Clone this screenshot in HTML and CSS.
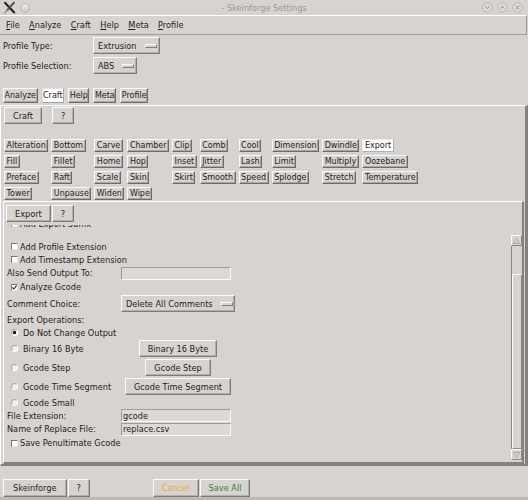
FILE: index.html
```html
<!DOCTYPE html>
<html lang="en">
<head>
    <meta charset="UTF-8">
    <meta name="viewport" content="width=device-width, initial-scale=1.0">
    <title>Skeinforge Settings</title>
    <link rel="stylesheet" href="styles.css">
</head>
<body>
    <div class="window">
        <div class="titlebar">
            <div class="tb-left">
                <svg class="app-icon" width="13" height="13" viewBox="0 0 13 13">
                    <path d="M2 1.8 L11.2 11.4" stroke="#262626" stroke-width="2.2" stroke-linecap="round"/>
                    <path d="M11 1.6 L4 9.4" stroke="#4a4a4a" stroke-width="1.8" stroke-linecap="round"/>
                    <path d="M4 9.4 L1.6 12" stroke="#a09a90" stroke-width="1.6" stroke-linecap="round"/>
                </svg>
                <span class="pin"></span>
            </div>
            <div class="title">- Skeinforge Settings</div>
            <div class="tb-right">
                <svg class="wm-btn" width="11" height="11" viewBox="0 0 11 11"><circle cx="5.5" cy="5.5" r="4.8"/><path d="M3.6 4.6 L5.5 6.5 L7.4 4.6"/></svg>
                <svg class="wm-btn" width="11" height="11" viewBox="0 0 11 11"><circle cx="5.5" cy="5.5" r="4.8"/><path d="M3.6 6.4 L5.5 4.5 L7.4 6.4"/></svg>
                <svg class="wm-btn" width="11" height="11" viewBox="0 0 11 11"><circle cx="5.5" cy="5.5" r="4.8"/><path d="M3.8 3.8 L7.2 7.2 M7.2 3.8 L3.8 7.2"/></svg>
            </div>
        </div>

        <div class="menubar">
            <span><u>F</u>ile</span>
            <span><u>A</u>nalyze</span>
            <span><u>C</u>raft</span>
            <span><u>H</u>elp</span>
            <span><u>M</u>eta</span>
            <span><u>P</u>rofile</span>
        </div>

        <div class="profile">
            <div class="profile-row">
                <span class="profile-label">Profile Type:</span>
                <span class="optmenu">Extrusion<i class="indicator"></i></span>
            </div>
            <div class="profile-row">
                <span class="profile-label">Profile Selection:</span>
                <span class="optmenu">ABS<i class="indicator"></i></span>
            </div>
        </div>

        <div class="tabs">
            <span class="tab">Analyze</span>
            <span class="tab active">Craft</span>
            <span class="tab">Help</span>
            <span class="tab">Meta</span>
            <span class="tab">Profile</span>
        </div>

        <div class="notebook">
            <div class="toolbar craft-bar">
                <span class="btn">Craft</span>
                <span class="btn">?</span>
            </div>

            <div class="plugins">
                <span class="plug">Alteration</span>
                <span class="plug">Bottom</span>
                <span class="plug">Carve</span>
                <span class="plug">Chamber</span>
                <span class="plug">Clip</span>
                <span class="plug">Comb</span>
                <span class="plug">Cool</span>
                <span class="plug">Dimension</span>
                <span class="plug">Dwindle</span>
                <span class="plug active">Export</span>
                <span class="plug">Fill</span>
                <span class="plug">Fillet</span>
                <span class="plug">Home</span>
                <span class="plug">Hop</span>
                <span class="plug">Inset</span>
                <span class="plug">Jitter</span>
                <span class="plug">Lash</span>
                <span class="plug">Limit</span>
                <span class="plug">Multiply</span>
                <span class="plug">Oozebane</span>
                <span class="plug">Preface</span>
                <span class="plug">Raft</span>
                <span class="plug">Scale</span>
                <span class="plug">Skin</span>
                <span class="plug">Skirt</span>
                <span class="plug">Smooth</span>
                <span class="plug">Speed</span>
                <span class="plug">Splodge</span>
                <span class="plug">Stretch</span>
                <span class="plug">Temperature</span>
                <span class="plug">Tower</span>
                <span class="plug">Unpause</span>
                <span class="plug">Widen</span>
                <span class="plug">Wipe</span>
            </div>

            <div class="pane">
                <div class="toolbar export-bar">
                    <span class="btn">Export</span>
                    <span class="btn">?</span>
                </div>

                <div class="scroller">
                    <div class="canvas">
                        <div class="row cut">
                            <span class="check"><i class="box"></i>Add Export Suffix</span>
                        </div>
                        <div class="row">
                            <span class="check"><i class="box"></i>Add Profile Extension</span>
                        </div>
                        <div class="row">
                            <span class="check"><i class="box"></i>Add Timestamp Extension</span>
                        </div>
                        <div class="row h14">
                            <span class="lbl">Also Send Output To:</span>
                            <span class="entry"></span>
                        </div>
                        <div class="row h14">
                            <span class="check"><i class="box"><svg width="5" height="5" viewBox="0 0 5 5"><path d="M0.4 2.4 L1.9 4 L4.6 0.6"/></svg></i>Analyze Gcode</span>
                        </div>
                        <div class="row h19">
                            <span class="lbl">Comment Choice:</span>
                            <span class="optmenu">Delete All Comments<i class="indicator"></i></span>
                        </div>
                        <div class="row">
                            <span class="lbl">Export Operations:</span>
                        </div>
                        <div class="row">
                            <span class="radio wide-cell"><i class="dot on"></i>Do Not Change Output</span>
                        </div>
                        <div class="row h19">
                            <span class="radio"><i class="dot"></i>Binary 16 Byte</span>
                            <span class="btn centered">Binary 16 Byte</span>
                        </div>
                        <div class="row h19">
                            <span class="radio"><i class="dot"></i>Gcode Step</span>
                            <span class="btn centered">Gcode Step</span>
                        </div>
                        <div class="row h19">
                            <span class="radio"><i class="dot"></i>Gcode Time Segment</span>
                            <span class="btn centered">Gcode Time Segment</span>
                        </div>
                        <div class="row">
                            <span class="radio"><i class="dot"></i>Gcode Small</span>
                        </div>
                        <div class="row">
                            <span class="lbl">File Extension:</span>
                            <span class="entry">gcode</span>
                        </div>
                        <div class="row h14">
                            <span class="lbl">Name of Replace File:</span>
                            <span class="entry">replace.csv</span>
                        </div>
                        <div class="row h14">
                            <span class="check"><i class="box"></i>Save Penultimate Gcode</span>
                        </div>
                    </div>

                    <div class="scrollbar">
                        <div class="sb-arrow">
                            <svg width="7" height="6" viewBox="0 0 7 6"><path d="M0.5 5.5 L3.5 0.5 L6.5 5.5 Z"/></svg>
                        </div>
                        <div class="sb-trough">
                            <div class="sb-thumb"></div>
                        </div>
                        <div class="sb-arrow">
                            <svg width="7" height="6" viewBox="0 0 7 6"><path d="M0.5 0.5 L3.5 5.5 L6.5 0.5 Z"/></svg>
                        </div>
                    </div>
                </div>
            </div>
        </div>

        <div class="footer">
            <span class="btn tall wide">Skeinforge</span>
            <span class="btn tall">?</span>
            <span class="btn tall cancel">Cancel</span>
            <span class="btn tall save">Save All</span>
        </div>
    </div>
</body>
</html>
```

FILE: styles.css
```css
* {
    box-sizing: border-box;
}

body {
    margin: 0;
    background: #d7d3d0;
    color: #1e1e1e;
    font-family: 'DejaVu Sans', sans-serif;
    font-size: 8.2px;
}

.window {
    width: 528px;
    height: 500px;
    display: flex;
    flex-direction: column;
    overflow: hidden;
}

/* title bar */
.titlebar {
    height: 15px;
    display: grid;
    grid-template-columns: 1fr auto 1fr;
    align-items: center;
}
.tb-left {
    display: flex;
    align-items: center;
    gap: 4px;
    padding-left: 3px;
}
.pin {
    width: 10px;
    height: 10px;
    border-radius: 50%;
    border: 1px solid #b9b5b2;
    background: linear-gradient(#eeecea, #cdc9c6);
}
.title {
    color: #9d9a97;
}
.tb-right {
    display: flex;
    justify-content: flex-end;
    gap: 4px;
    padding-right: 5px;
}
.wm-btn circle {
    fill: #dcd8d5;
    stroke: #b2aeab;
    stroke-width: 0.8;
}
.wm-btn path {
    fill: none;
    stroke: #8e8a87;
    stroke-width: 1;
}

/* menu */
.menubar {
    width: 527px;
    height: 20px;
    display: flex;
    align-items: center;
    gap: 9.4px;
    padding-left: 6px;
    border-top: 1px solid #fff;
    border-bottom: 1px solid #9e9a97;
    border-right: 1px solid #9e9a97;
}
.menubar u {
    text-underline-offset: 1px;
}

/* profile selectors */
.profile {
    display: flex;
    flex-direction: column;
    gap: 3px;
    padding: 2px 0 0 3px;
}
.profile-row {
    display: flex;
    align-items: center;
    height: 17px;
}
.profile-label {
    width: 90px;
}

.optmenu {
    display: inline-flex;
    align-items: center;
    height: 17px;
    padding: 0 2px 0 4px;
    border: 1px solid;
    border-color: #fbfaf9 #7f7b78 #7f7b78 #fbfaf9;
    box-shadow: inset -1px -1px 0 #b3afac;
    white-space: nowrap;
}
.indicator {
    flex-shrink: 0;
    width: 12px;
    height: 4px;
    margin-left: 8px;
    border: 1px solid;
    border-color: #fbfaf9 #7f7b78 #7f7b78 #fbfaf9;
}

/* tabs */
.tabs {
    display: flex;
    gap: 4px;
    height: 15px;
    margin-top: 14px;
    padding-left: 3px;
    font-size: 8px;
}
.tab {
    display: flex;
    align-items: center;
    height: 15px;
    padding: 0 0.5px;
    border: 1px solid;
    border-color: #fbfaf9 #6f6b68 #6f6b68 #fbfaf9;
    box-shadow: inset -1px -1px 0 #aaa6a3;
}
.tab.active {
    background: #fff;
    border-color: #e4e1df #a7a3a0 #a7a3a0 #e4e1df;
    box-shadow: none;
}

/* notebook frame */
.notebook {
    height: 361px;
    margin-top: 2px;
    display: flex;
    flex-direction: column;
    border-style: solid;
    border-width: 1px 3px 2px 1px;
    border-color: #fff #85817e #85817e #fff;
}

.toolbar {
    display: flex;
}
.craft-bar {
    gap: 10px;
    padding: 1px 0 0 3px;
}
.export-bar {
    gap: 1px;
    padding: 3px 0 0 2px;
}

.btn {
    display: inline-flex;
    align-items: center;
    justify-content: center;
    height: 17px;
    padding: 0 8px;
    border: 1px solid;
    border-color: #fbfaf9 #7f7b78 #7f7b78 #fbfaf9;
    box-shadow: inset -1px -1px 0 #b3afac;
    white-space: nowrap;
}
.btn.tall {
    height: 18px;
}
.btn.wide {
    padding: 0 9px;
}
.btn.centered {
    justify-self: center;
}
.btn.cancel {
    color: #f0aa30;
}
.btn.save {
    color: #2f8a2f;
}

/* plugin buttons */
.plugins {
    display: grid;
    grid-template-columns: repeat(10, max-content);
    grid-auto-rows: 13px;
    gap: 3px;
    justify-items: start;
    margin-top: 15px;
    padding-left: 3px;
    font-size: 8px;
}
.plug {
    display: flex;
    align-items: center;
    height: 13px;
    padding: 0 1.5px;
    border: 1px solid;
    border-color: #fbfaf9 #6f6b68 #6f6b68 #fbfaf9;
    box-shadow: inset -1px -1px 0 #aaa6a3;
}
.plug.active {
    background: #fff;
    border-color: #ebe9e7 #b4b0ad #b4b0ad #ebe9e7;
    box-shadow: none;
}

/* export pane */
.pane {
    flex: 1;
    display: flex;
    flex-direction: column;
    margin: 1px 1px 0 2px;
    border-style: solid;
    border-width: 1px 2px 2px 1px;
    border-color: #fff #85817e #85817e #fff;
}

.scroller {
    display: flex;
    height: 237px;
    margin-top: 3px;
}
.canvas {
    flex: 1;
    overflow: hidden;
    padding-left: 3px;
}

.row {
    display: grid;
    grid-template-columns: 114px 114px;
    align-items: center;
    height: 13px;
    white-space: nowrap;
}
.row.h14 {
    height: 14px;
}
.row.h19 {
    height: 19px;
}
.row.cut {
    margin: -8px 0 10px;
}

.check,
.radio {
    display: flex;
    align-items: center;
    padding-left: 4px;
}
.check,
.wide-cell {
    grid-column: 1 / -1;
}
.box {
    flex-shrink: 0;
    display: flex;
    align-items: center;
    justify-content: center;
    width: 7px;
    height: 7px;
    margin-right: 2px;
    background: #fff;
    border: 1px solid;
    border-color: #7d7976 #e6e3e1 #e6e3e1 #7d7976;
}
.box svg path {
    fill: none;
    stroke: #222;
    stroke-width: 1.1;
}
.dot {
    flex-shrink: 0;
    width: 7px;
    height: 7px;
    margin-right: 5px;
    border-radius: 50%;
    background: #f1efed;
    border: 1px solid;
    border-color: #aaa6a3 #fff #fff #aaa6a3;
}
.dot.on {
    background: radial-gradient(circle, #1e1e1e 0 1.4px, #f1efed 1.8px);
}

.entry {
    display: flex;
    align-items: center;
    width: 110px;
    height: 13px;
    padding-left: 1px;
    background: #dcd9d6;
    border: 1px solid;
    border-color: #a09c99 #fbfaf9 #fbfaf9 #a09c99;
}

/* scrollbar */
.scrollbar {
    width: 11px;
    display: flex;
    flex-direction: column;
    margin: 10px 0 2px;
}
.sb-arrow {
    display: flex;
    align-items: center;
    justify-content: center;
    height: 11px;
    border: 1px solid;
    border-color: #fbfaf9 #8d8986 #8d8986 #fbfaf9;
}
.sb-arrow path {
    fill: none;
    stroke: #a5a19e;
    stroke-width: 0.9;
}
.sb-trough {
    flex: 1;
    display: flex;
    flex-direction: column;
    padding-top: 28px;
    border-left: 1px solid #8d8986;
}
.sb-thumb {
    flex: 1;
    border: 1px solid;
    border-color: #fbfaf9 #8d8986 #8d8986 #fbfaf9;
}

/* bottom buttons */
.footer {
    flex: 1;
    display: flex;
    align-items: flex-start;
    padding: 13px 0 0 3px;
    border-bottom: 3px solid #bcb8b5;
}
.footer .btn + .btn {
    margin-left: 1px;
}
.footer .btn.cancel {
    margin-left: 63px;
}
```
